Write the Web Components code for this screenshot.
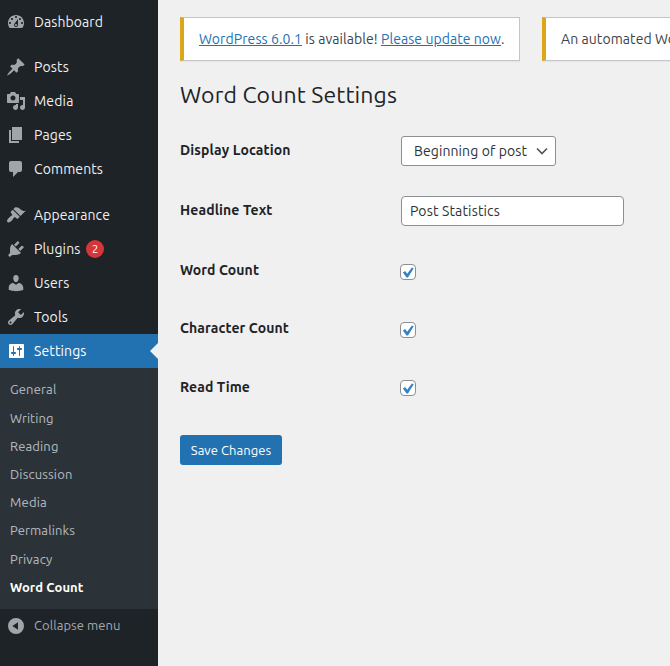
<!DOCTYPE html>
<html lang="en">
<head>
<meta charset="utf-8">
<title>Word Count Settings</title>
<style>
html,body{margin:0;height:100%;overflow:hidden;background:#f0f0f1}
body{font:14px/20px Ubuntu,"Open Sans","Noto Sans",sans-serif;color:#3c434a}
</style>
</head>
<body>
<wp-admin></wp-admin>
<script>
const paths={
dashboard:"M3.76 16h12.48c1.1-1.37 1.76-3.11 1.76-5 0-4.42-3.58-8-8-8s-8 3.58-8 8c0 1.89.66 3.63 1.76 5zM10 4c.55 0 1 .45 1 1s-.45 1-1 1-1-.45-1-1 .45-1 1-1zM6 6c.55 0 1 .45 1 1s-.45 1-1 1-1-.45-1-1 .45-1 1-1zm8 0c.55 0 1 .45 1 1s-.45 1-1 1-1-.45-1-1 .45-1 1-1zm-5.37 5.55L12 7v6c0 1.1-.9 2-2 2s-2-.9-2-2c0-.57.24-1.08.63-1.45zM4 10c.55 0 1 .45 1 1s-.45 1-1 1-1-.45-1-1 .45-1 1-1zm12 0c.55 0 1 .45 1 1s-.45 1-1 1-1-.45-1-1 .45-1 1-1zm-5 3c0-.55-.45-1-1-1s-1 .45-1 1 .45 1 1 1 1-.45 1-1z",
post:"M10.44 3.02l1.82-1.82 6.36 6.35-1.83 1.82c-1.05-.68-2.48-.57-3.41.36l-.75.75c-.92.93-1.04 2.35-.35 3.41l-1.83 1.82-2.41-2.41-2.8 2.79c-.42.42-3.38 2.71-3.8 2.29s1.86-3.39 2.28-3.81l2.79-2.79L4.1 9.36l1.83-1.82c1.05.69 2.48.57 3.4-.36l.75-.75c.93-.92 1.05-2.35.36-3.41z",
media:"M13 11V4c0-.55-.45-1-1-1h-1.67L9 1H5L3.67 3H2c-.55 0-1 .45-1 1v7c0 .55.45 1 1 1h10c.55 0 1-.45 1-1zM7 4.5c1.38 0 2.5 1.12 2.5 2.5S8.38 9.5 7 9.5 4.5 8.38 4.5 7 5.62 4.5 7 4.5zM14 6h5v10.5c0 1.38-1.12 2.5-2.5 2.5S14 17.88 14 16.5s1.12-2.5 2.5-2.5c.17 0 .34.02.5.05V9h-3V6zm-4 8.05V13h2v3.5c0 1.38-1.12 2.5-2.5 2.5S7 17.88 7 16.5 8.12 14 9.5 14c.17 0 .34.02.5.05z",
page:"M6 15V2h10v13H6zm-1 1h8v2H3V5h2v11z",
comments:"M5 2h9c1.1 0 2 .9 2 2v7c0 1.1-.9 2-2 2h-2l-5 5v-5H5c-1.1 0-2-.9-2-2V4c0-1.1.9-2 2-2z",
appearance:"M14.48 11.06L7.41 3.99l1.5-1.5c.5-.56 2.3-.47 3.51.32 1.21.8 1.43 1.28 2.91 2.1 1.18.64 2.45 1.26 4.45.85zm-.71.71L6.7 4.7 4.93 6.47c-.39.39-.39 1.02 0 1.41l1.06 1.06c.39.39.39 1.03 0 1.42-.6.6-1.43 1.11-2.21 1.69-.35.26-.7.53-1.01.84C1.43 14.23.4 16.08 1.4 17.07c.99 1 2.84-.03 4.18-1.36.31-.31.58-.66.85-1.02.57-.78 1.08-1.61 1.69-2.21.39-.39 1.02-.39 1.41 0l1.06 1.06c.39.39 1.02.39 1.41 0z",
plugins:"M13.11 4.36L9.87 7.6 8 5.73l3.24-3.24c.35-.34 1.05-.2 1.56.32.52.51.66 1.21.31 1.55zm-8 1.77l.91-1.12 9.01 9.01-1.19.84c-.71.71-2.63 1.16-3.82 1.16H6.14L4.9 17.26c-.59.59-1.54.59-2.12 0-.59-.58-.59-1.53 0-2.12l1.24-1.24v-3.88c0-1.13.4-3.19 1.09-3.89zm7.26 3.97l3.24-3.24c.34-.35 1.04-.21 1.55.31.52.51.66 1.21.31 1.55l-3.24 3.25z",
users:"M10 9.25c-2.27 0-2.73-3.44-2.73-3.44C7 4.02 7.82 2 9.97 2c2.16 0 2.98 2.02 2.71 3.81 0 0-.41 3.44-2.68 3.44zm0 2.57L12.72 10c2.39 0 4.52 2.33 4.52 4.53v2.49s-3.65 1.13-7.24 1.13c-3.65 0-7.24-1.13-7.24-1.13v-2.49c0-2.25 1.94-4.48 4.47-4.48z",
tools:"M16.68 9.77c-1.34 1.34-3.3 1.67-4.95.99l-5.41 6.52c-.99.99-2.59.99-3.58 0s-.99-2.59 0-3.57l6.52-5.42c-.68-1.65-.35-3.61.99-4.95 1.28-1.28 3.12-1.62 4.72-1.06l-2.89 2.89 2.82 2.82 2.86-2.87c.53 1.58.18 3.39-1.08 4.65zM3.81 16.21c.4.39 1.04.39 1.43 0 .4-.4.4-1.04 0-1.43-.39-.4-1.03-.4-1.43 0-.39.39-.39 1.03 0 1.43z",
settings:"M18 16V4c0-.55-.45-1-1-1H4c-.55 0-1 .45-1 1v12c0 .55.45 1 1 1h13c.55 0 1-.45 1-1zM8 11h1c.55 0 1 .45 1 1s-.45 1-1 1H8v1.5c0 .28-.22.5-.5.5s-.5-.22-.5-.5V13H6c-.55 0-1-.45-1-1s.45-1 1-1h1V5.5c0-.28.22-.5.5-.5s.5.22.5.5V11zm5-2h-1c-.55 0-1-.45-1-1s.45-1 1-1h1V5.5c0-.28.22-.5.5-.5s.5.22.5.5V7h1c.55 0 1 .45 1 1s-.45 1-1 1h-1v5.5c0 .28-.22.5-.5.5s-.5-.22-.5-.5V9z",
collapse:"M10 2a8 8 0 1 0 0 16a8 8 0 1 0 0-16zM12 6.2v7.6L6.3 10z"
};
const make=(name,html,init)=>customElements.define(name,class extends HTMLElement{
  connectedCallback(){
    if(!this.shadowRoot)this.attachShadow({mode:"open"}).innerHTML=typeof html==="function"?html(this):html;
    if(init)init(this);
  }
});
/* Tracks its text so that it fills the given width. */
make("fit-text",`<style>:host{display:inline-block;white-space:pre;flex:none}</style><slot></slot>`,el=>{
  const w=+el.getAttribute("w"),n=el.textContent.length;
  el.style.letterSpacing="0px";
  const natural=el.getBoundingClientRect().width;
  el.style.letterSpacing=((w-natural)/n)+"px";
  el.style.width=w+"px";
});
make("dash-icon",el=>`<style>:host{display:block;width:20px;height:20px;flex:none}svg{display:block}</style>
<svg width="20" height="20" viewBox="0 0 20 20"><path fill="currentColor" fill-rule="evenodd" d="${paths[el.getAttribute("name")]}"/></svg>`);
make("menu-item",el=>`<style>
:host{display:flex;align-items:center;height:34px;padding-left:6px;gap:8px;color:#f0f0f1;position:relative;box-sizing:border-box}
dash-icon{color:#a0a5aa}
:host([current]){background:#2271b1;color:#fff}
:host([current]) dash-icon{color:#fff}
:host([current])::after{content:"";position:absolute;right:0;top:9px;border:8px solid transparent;border-left:0;border-right-color:#f0f0f1}
:host([small]){font-size:13px;color:#a7aaad}
:host([small]) ::slotted(fit-text){margin-bottom:2px}
</style><dash-icon name="${el.getAttribute("icon")}"></dash-icon><slot></slot>`);
make("count-badge",`<style>:host{display:block;width:18px;height:18px;border-radius:9px;background:#d63638;color:#fff;font-size:11px;line-height:18px;text-align:center;margin-left:-2.5px}</style><slot></slot>`);
make("sub-item",`<style>:host{display:flex;align-items:center;height:28.2px;padding-left:10px;font-size:13px;color:rgba(240,246,252,.7)}
:host([current]){color:#fff;font-weight:600}</style><slot></slot>`);
make("side-menu",`<style>
:host{display:block;width:158px;flex:none;background:#1d2327;padding-top:5px;box-sizing:border-box}
.gap{height:12px}.first{height:11px}.sub{background:#2c3338;height:241px;padding-top:7.3px;box-sizing:border-box}
</style>
<menu-item icon="dashboard"><fit-text w="69">Dashboard</fit-text></menu-item><div class="first"></div>
<menu-item icon="post"><fit-text w="35">Posts</fit-text></menu-item>
<menu-item icon="media"><fit-text w="39.5">Media</fit-text></menu-item>
<menu-item icon="page"><fit-text w="38">Pages</fit-text></menu-item>
<menu-item icon="comments"><fit-text w="69">Comments</fit-text></menu-item><div class="gap"></div>
<menu-item icon="appearance"><fit-text w="76">Appearance</fit-text></menu-item>
<menu-item icon="plugins"><fit-text w="46.5">Plugins</fit-text><count-badge>2</count-badge></menu-item>
<menu-item icon="users"><fit-text w="35.5">Users</fit-text></menu-item>
<menu-item icon="tools"><fit-text w="34">Tools</fit-text></menu-item>
<menu-item icon="settings" current><fit-text w="52.5">Settings</fit-text></menu-item>
<div class="sub">
<sub-item><fit-text w="46.5">General</fit-text></sub-item>
<sub-item><fit-text w="43.5">Writing</fit-text></sub-item>
<sub-item><fit-text w="48.5">Reading</fit-text></sub-item>
<sub-item><fit-text w="62.5">Discussion</fit-text></sub-item>
<sub-item><fit-text w="37">Media</fit-text></sub-item>
<sub-item><fit-text w="65">Permalinks</fit-text></sub-item>
<sub-item><fit-text w="42.5">Privacy</fit-text></sub-item>
<sub-item current><fit-text w="73.5">Word Count</fit-text></sub-item>
</div>
<menu-item icon="collapse" small><fit-text w="86.5">Collapse menu</fit-text></menu-item>`);
make("admin-notice",`<style>:host{display:flex;align-items:center;height:44px;box-sizing:border-box;background:#fff;border:1px solid #c3c4c7;border-left:4px solid #dba617;box-shadow:0 1px 1px rgba(0,0,0,.04);padding:0 15px;white-space:pre;flex:none}</style><slot></slot>`);
make("text-link",`<style>:host{display:block;color:#2271b1;flex:none}a{display:block;color:inherit}::slotted(fit-text){text-decoration:underline;vertical-align:top}</style><a><slot></slot></a>`);
make("form-row",el=>`<style>:host{display:grid;grid-template-columns:221px 1fr;align-items:start}
.label{font-weight:600;color:#1d2327;line-height:20px;padding-top:4px}:host([low]) .label{padding-top:5px}</style>
<div class="label"><fit-text w="${el.getAttribute("w")}">${el.getAttribute("label")}</fit-text></div><slot></slot>`);
make("select-box",`<style>:host{display:flex;align-items:center;justify-content:space-between;width:155px;height:30px;box-sizing:border-box;border:1px solid #8c8f94;border-radius:3px;background:#fff;color:#2c3338;padding:0 4px 0 12px}svg{display:block}</style><slot></slot>
<svg width="18" height="16" viewBox="0 0 18 16"><path d="M4 5.5l5 5 5-5" fill="none" stroke="#50575e" stroke-width="1.7"/></svg>`);
make("text-box",`<style>:host{display:flex;align-items:center;width:223px;height:30px;box-sizing:border-box;border:1px solid #8c8f94;border-radius:4px;background:#fff;color:#2c3338;padding:0 8px}</style><slot></slot>`);
make("check-box",`<style>:host{display:block;width:16px;height:16px;box-sizing:border-box;border:1px solid #8c8f94;border-radius:4px;background:#fff;margin:8px 0 0 -1px}svg{display:block}</style>
<svg width="14" height="14" viewBox="0 0 14 14"><path d="M1.9 7.5L4.1 6.1 6.2 8.8 10.9 2.4 12.7 3.3 7 12.5 5.5 12.5z" fill="#3582c4"/></svg>`);
make("save-button",`<style>:host{display:flex;align-items:center;justify-content:center;width:102px;height:30px;border-radius:3px;background:#2271b1;color:#fff;font-size:13px}</style><slot></slot>`);
make("settings-page",`<style>
:host{display:block;flex:1;min-width:0;padding:17px 0 0 22px;overflow:hidden}
.notices{display:flex;gap:22px}
h1{font-size:23px;font-weight:400;line-height:30px;color:#1d2327;margin:19px 0 26px}
.form{display:grid;grid-template-rows:60px 60px 58px 58px 63px}
</style>
<div class="notices">
<admin-notice><text-link><fit-text w="103">WordPress 6.0.1</fit-text></text-link><fit-text w="79"> is available! </fit-text><text-link><fit-text w="120">Please update now</fit-text></text-link><fit-text w="3">.</fit-text></admin-notice>
<admin-notice><fit-text w="94">An automated </fit-text><fit-text w="68">WordPress</fit-text></admin-notice>
</div>
<h1><fit-text w="217">Word Count Settings</fit-text></h1>
<div class="form">
<form-row label="Display Location" w="110.5"><select-box><fit-text w="113">Beginning of post</fit-text></select-box></form-row>
<form-row label="Headline Text" w="92.5"><text-box><fit-text w="90">Post Statistics</fit-text></text-box></form-row>
<form-row label="Word Count" w="79"><check-box></check-box></form-row>
<form-row label="Character Count" w="109"><check-box></check-box></form-row>
<form-row low label="Read Time" w="70"><check-box></check-box></form-row>
</div>
<save-button><fit-text w="80.5">Save Changes</fit-text></save-button>`);
make("wp-admin",`<style>:host{display:flex;height:100vh}</style><side-menu></side-menu><settings-page></settings-page>`);
</script>
</body>
</html>
